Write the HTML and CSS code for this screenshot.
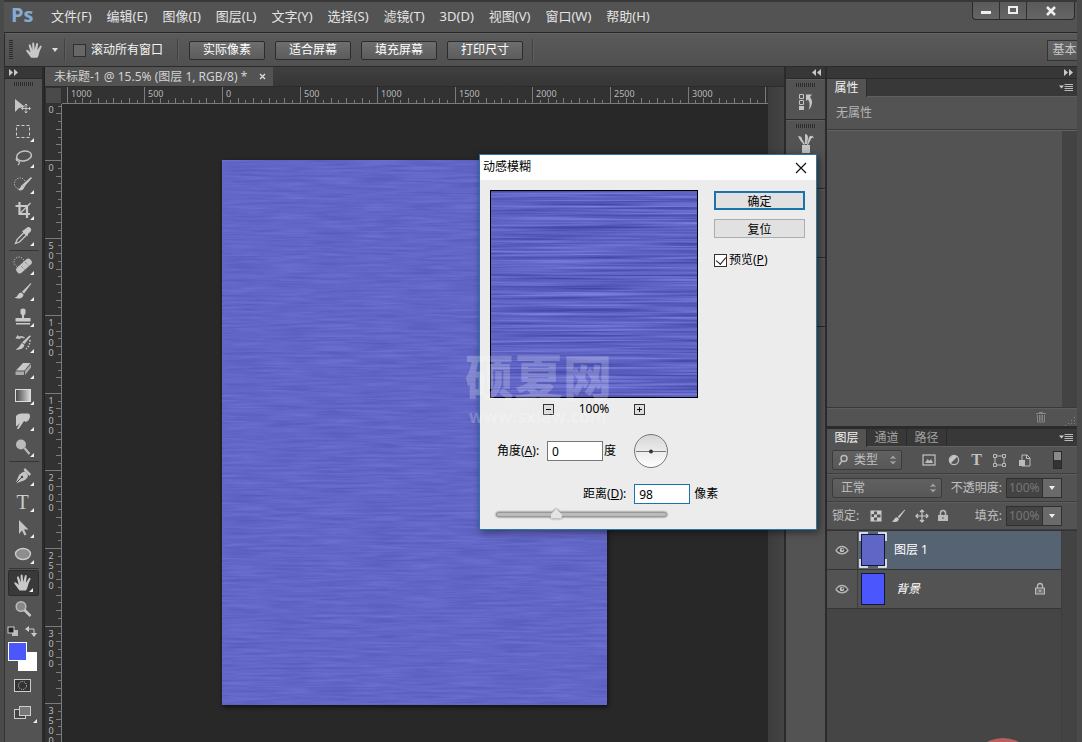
FILE: index.html
```html
<!DOCTYPE html>
<html lang="zh-CN">
<head>
<meta charset="utf-8">
<title>未标题-1</title>
<link rel="stylesheet" href="styles.css">
</head>
<body>
<svg class="defs" width="0" height="0" aria-hidden="true">
  <defs>
    <filter id="brushed-soft" x="0" y="0" width="100%" height="100%" color-interpolation-filters="sRGB">
      <feTurbulence type="fractalNoise" baseFrequency="0.022 0.4" numOctaves="3" seed="4"/>
      <feColorMatrix values="0.11 0 0 0 0.33  0.11 0 0 0 0.345  0.11 0 0 0 0.72  0 0 0 0 1"/>
    </filter>
    <filter id="brushed-hard" x="0" y="0" width="100%" height="100%" color-interpolation-filters="sRGB">
      <feTurbulence type="fractalNoise" baseFrequency="0.006 0.42" numOctaves="3" seed="9"/>
      <feColorMatrix values="0.36 0 0 0 0.19  0.36 0 0 0 0.205  0.36 0 0 0 0.58  0 0 0 0 1"/>
    </filter>
    <linearGradient id="fade"><stop offset="0" stop-color="#444"/><stop offset="1" stop-color="#ddd"/></linearGradient>
    <linearGradient id="dial" x2="0" y2="1"><stop offset="0" stop-color="#d6d6d6"/><stop offset="1" stop-color="#fff"/></linearGradient>
    <symbol id="hand" viewBox="0 0 20 20"><path fill="#c9c9c9" d="M6.5 17.5 2 11.5q-1.3-1.6-.4-2.2.8-.5 2 .6L5.8 12 4 5q-.3-1.4.7-1.6.9-.2 1.3 1L7.800 9.500 7.600 3q0-1.400 1-1.400t1.100 1.400L10.200 9 11.700 3.200q.4-1.300 1.300-1.100 1 .3.700 1.500L12.900 9.800 15.700 5.500q.700-1 1.500-.5.700.500.100 1.500-2 4-2.500 6.500-.3 2.500-1.800 4.500z"/></symbol>
    <symbol id="brush" viewBox="0 0 20 20"><path fill="#c9c9c9" d="M18.500 2.500 11 12.500 9 10.800 17.500 2.200zM8.300 11.500l2.200 1.900q-.4 3.700-4.500 4-2.300.2-4.500-.7 2.500-.6 3.200-2.500.9-2.500 3.600-2.700z"/></symbol>
    <symbol id="eye" viewBox="0 0 14 10"><path d="M1 5.500Q3.500 1.500 7 1.500t6 4Q10.500 8.800 7 8.800T1 5.500z" fill="#444" stroke="#b5b5b5" stroke-width="1.300"/><circle cx="7" cy="5" r="2.300" fill="#c4c4c4"/><circle cx="7.500" cy="4.500" r="1" fill="#444"/></symbol>
    <symbol id="updown" viewBox="0 0 6 10"><path d="M0 4 3 .5 6 4zM0 6 3 9.500 6 6z" fill="#a5a5a5"/><path d="M1.500 3.500h3v-.5h-3zM1.500 6.500h3v.5h-3z" fill="#555"/></symbol>
    <symbol id="panelmenu" viewBox="0 0 14 10"><path d="M0 2.500h5L2.500 5.500z" fill="#ccc"/><path d="M5.500 1.500H14M5.500 3.500H14M5.500 5.500H14M5.500 7.500H14" stroke="#bbb"/></symbol>
  </defs>
</svg>
<div class="app">
  <header class="menubar">
    <span class="logo">Ps</span>
    <nav class="menus">
      <button>文件(F)</button><button>编辑(E)</button><button>图像(I)</button><button>图层(L)</button><button>文字(Y)</button><button>选择(S)</button><button>滤镜(T)</button><button>3D(D)</button><button>视图(V)</button><button>窗口(W)</button><button>帮助(H)</button>
    </nav>
    <div class="winctl">
      <button aria-label="最小化"><svg width="12" height="12"><rect x="1" y="6" width="10" height="3" fill="#eee"/></svg></button>
      <button aria-label="最大化"><svg width="12" height="12"><rect x="2" y="2" width="8" height="6" fill="none" stroke="#eee" stroke-width="2"/></svg></button>
      <button class="wide" aria-label="关闭"><svg width="12" height="12"><path d="M2 2l8 8M10 2l-8 8" stroke="#eee" stroke-width="2.500"/></svg></button>
    </div>
  </header>

  <div class="optbar">
    <span class="vgrip"></span>
    <button class="toolpick" aria-label="抓手工具"><svg width="19" height="19"><use href="#hand"/></svg><svg width="6" height="4"><path d="M0 0h6L3 4z" fill="#ddd"/></svg></button>
    <span class="vsep"></span>
    <label class="scroll-all"><input type="checkbox" class="darkcheck">滚动所有窗口</label>
    <span class="vsep"></span>
    <div class="optbtns"><button>实际像素</button><button>适合屏幕</button><button>填充屏幕</button><button>打印尺寸</button></div>
    <span class="vsep"></span>
    <button class="workspace-pick">基本</button>
  </div>

  <div class="work">
    <aside class="tools">
      <div class="colhead"><svg width="9" height="7"><path d="M0 0l4 3.500L0 7zM5 0l4 3.500L5 7z" fill="#c8c8c8"/></svg></div>
      <div class="grip"></div>
      <div class="toolset">
        <button aria-label="移动"><svg width="22" height="20"><path d="M3 3v13l4-4 6-1z" fill="#c4c4c4"/><path d="M14 8v9M9.500 12.500h9M12.500 9.500 14 8l1.500 1.500M12.500 15.500 14 17l1.500-1.500M11 11l-1.500 1.500L11 14M17 11l1.500 1.500L17 14" stroke="#c4c4c4" fill="none"/></svg></button>
        <button class="more" aria-label="矩形选框"><svg width="20" height="20"><rect x="3.500" y="3.500" width="13" height="12" fill="none" stroke="#d0d0d0" stroke-dasharray="3 2"/></svg></button>
        <button class="more" aria-label="套索"><svg width="20" height="20"><ellipse cx="11" cy="8" rx="7.500" ry="4.800" transform="rotate(-12 11 8)" fill="none" stroke="#c4c4c4" stroke-width="1.500"/><path d="M4 10q-2 2 1 3t0 4" fill="none" stroke="#c4c4c4" stroke-width="1.300"/></svg></button>
        <button class="more" aria-label="快速选择"><svg width="20" height="20"><circle cx="7" cy="9.500" r="5.500" fill="none" stroke="#ddd" stroke-dasharray="1 1.500"/><path d="M19 4l-8 9-2-2 9-8zM8.500 11l3 2.500q-2 4-6.500 2.500 2-1 3.500-5z" fill="#c9c9c9"/></svg></button>
        <button class="more" aria-label="裁剪"><svg width="20" height="20"><path d="M6.500 2v12H17M2.500 6h11.500v12" fill="none" stroke="#c9c9c9" stroke-width="2.200"/><path d="M7 13.500 17.500 3" stroke="#c9c9c9" stroke-width="1.200"/></svg></button>
        <button class="more" aria-label="吸管"><svg width="20" height="20"><path d="M2.500 17.500 4 13.500 11 6.500l2.500 2.500-7 7z" fill="#555" stroke="#c9c9c9" stroke-width="1.300"/><path d="M9 5l2-1 3-2.500q2-1.200 3.500.5t.2 3.500l-2.700 2.500-.5 2.500z" fill="#c9c9c9"/></svg></button>
        <hr>
        <button class="more" aria-label="修复画笔"><svg width="20" height="20"><circle cx="6" cy="7" r="5" fill="none" stroke="#ddd" stroke-dasharray="1 1.500"/><rect x="2" y="7.500" width="18" height="7" rx="3" transform="rotate(-42 11 11)" fill="#c4c4c4"/><path d="m8 11 5 5M12 7l4 4" stroke="#777" stroke-dasharray="1 1"/></svg></button>
        <button class="more" aria-label="画笔"><svg width="20" height="20"><use href="#brush"/></svg></button>
        <button class="more" aria-label="图章"><svg width="20" height="20"><path d="M7.500 2.500q2.500-2 5 0v4l-1.500 2v2.500h6.500v3.500h-15v-3.500H9V8.500L7.500 6.500zM3 16h14v1.500H3z" fill="#c9c9c9"/></svg></button>
        <button class="more" aria-label="历史记录画笔"><svg width="20" height="20"><path d="M2.500 5.500l2-3.500 1.500 1.500q3-1.500 6 1l-1 1q-2-1.300-4-.5l1 1z" fill="#c4c4c4"/><path d="M18 3 11.500 11 9 9.500 16.500 2.500zM8.500 10l3 2Q10 17.500 2.500 16.500 6 15 8.500 10z" fill="#c9c9c9"/><path d="M17 7q0 6-4 9" fill="none" stroke="#ccc" stroke-width="1.500" stroke-dasharray="1.500 1.500"/></svg></button>
        <button class="more" aria-label="橡皮擦"><svg width="20" height="20"><path d="M3 11.500 10 4h7.500l-6 7.500z" fill="#c9c9c9"/><path d="M2.500 12.500H11V16H2.500zM12 12l6-7v3.500L12 16z" fill="#aaa"/></svg></button>
        <button class="more" aria-label="渐变"><svg width="20" height="20"><rect x="2.500" y="4.500" width="15" height="12" fill="url(#fade)" stroke="#ddd"/></svg></button>
        <button class="more" aria-label="涂抹"><svg width="20" height="20"><path d="M3 5q2-3 6-2.500h6q2 0 2 3-.5 4-4 5.500l-2-1-5 7.500q-1.500 1-2 0L7 12l-3 3q-1 .500-1-1z" fill="#c9c9c9"/></svg></button>
        <button class="more" aria-label="减淡"><svg width="20" height="20"><circle cx="8" cy="7.500" r="5" fill="#bbb"/><path d="m11.500 11 5 6" stroke="#bbb" stroke-width="2.200"/></svg></button>
        <hr>
        <button class="more" aria-label="钢笔"><svg width="20" height="20"><path d="M2.500 17.500 6 9q3-3.500 6-3.500l3 3.500q0 3-4 5.500z" fill="#c4c4c4"/><path d="m2.500 17.500 6-6" stroke="#444"/><circle cx="9" cy="11" r="1.200" fill="#444"/><path d="m12 2 6 6-1.500 2-6-6z" fill="#c4c4c4"/></svg></button>
        <button class="more" aria-label="文字"><span class="t-icon">T</span></button>
        <button class="more" aria-label="路径选择"><svg width="20" height="20"><path d="M6 2v14l3-3.500 2.500 5 2-1L11 11.500h4.500z" fill="#c4c4c4"/></svg></button>
        <button class="more" aria-label="椭圆"><svg width="20" height="20"><ellipse cx="10" cy="10" rx="7.500" ry="5.500" fill="#8d8d8d" stroke="#ccc" stroke-width="1.300"/></svg></button>
        <hr>
        <button class="more on" aria-label="抓手"><svg width="20" height="20"><use href="#hand"/></svg></button>
        <button aria-label="缩放"><svg width="20" height="20"><circle cx="8" cy="7.500" r="4.800" fill="#888" stroke="#bbb" stroke-width="1.500"/><path d="m11.500 11 6 6" stroke="#c9c9c9" stroke-width="2.500"/></svg></button>
      </div>
      <div class="swapline">
        <svg width="12" height="11"><rect x="5" y="4" width="6" height="6" fill="#bbb"/><rect x="1" y="1" width="6" height="6" fill="#222" stroke="#ccc"/></svg>
        <svg width="12" height="11"><path d="M4 0v6L0 3zM6 7h6L9 11z" fill="#ccc"/><path d="M3 3h6v5" fill="none" stroke="#ccc"/></svg>
      </div>
      <div class="swatches"><button class="bg" aria-label="背景色"></button><button class="fg" aria-label="前景色"></button></div>
      <button class="tall" aria-label="快速蒙版"><svg width="18" height="14"><rect x=".5" y=".5" width="16" height="12" fill="#333" stroke="#ccc"/><circle cx="8.500" cy="6.500" r="4" fill="none" stroke="#ddd" stroke-dasharray="1 1.200"/></svg></button>
      <button class="tall more" aria-label="屏幕模式"><svg width="18" height="14"><rect x=".5" y="3.500" width="11" height="9" fill="#444" stroke="#ccc"/><rect x="5.500" y=".5" width="11" height="9" fill="#777" stroke="#ccc"/></svg></button>
    </aside>

    <main class="doc">
      <div class="tabs"><div class="tab">未标题-1 @ 15.5% (图层 1, RGB/8) *<button aria-label="关闭文档"><svg width="7" height="7"><path d="M1 1l5 5M6 1 1 6" stroke="#ddd" stroke-width="1.300"/></svg></button></div></div>
      <div class="view">
        <div class="corner"></div>
        <svg class="hruler" id="hruler"></svg>
        <div class="scroll"></div>
        <svg class="vruler" id="vruler"></svg>
        <div class="canvas"><svg class="artboard"><rect width="100%" height="100%" filter="url(#brushed-soft)"/></svg></div>
      </div>
    </main>

    <aside class="dock">
      <div class="colhead end"><svg width="9" height="7"><path d="M4 0 0 3.500 4 7zM9 0 5 3.500 9 7z" fill="#c8c8c8"/></svg></div>
      <div class="dockgroup first"><div class="grip"></div><button aria-label="历史记录"><svg width="18" height="20"><path d="M2.500 3.500h4v4h-4zM2.500 9.500h4v4h-4z" fill="none" stroke="#c4c4c4"/><path d="M2 15h5v4H2z" fill="#c4c4c4"/><path d="M9 3.500h6L13 6q5 6-1.500 13 2.500-6-.5-10.500L9 10z" fill="#c4c4c4"/></svg></button></div>
      <div class="dockgroup"><div class="grip"></div><button aria-label="画笔预设"><svg width="18" height="22"><path d="M5 13h8v8H5zM8 2q3 0 3 4l-1 6H8zM1 4q4 0 4 3l3 5-1 1-4-5zM12 5q3-3 5 1-2-1-3 1l-3 6h-1z" fill="#c4c4c4"/></svg></button></div>
      <div class="dockgroup"></div>
      <div class="dockgroup"></div>
      <div class="dockrest"></div>
    </aside>

    <aside class="panels">
      <div class="colhead end"><svg width="9" height="7"><path d="M0 0l4 3.500L0 7zM5 0l4 3.500L5 7z" fill="#c8c8c8"/></svg></div>
      <section class="props">
        <div class="ptabs"><button class="active">属性</button><svg class="pm" width="14" height="10"><use href="#panelmenu"/></svg></div>
        <div class="propinfo">无属性</div>
        <div class="propbody"><div class="fill"></div><div class="scroll"></div></div>
        <div class="propfoot">
          <svg width="12" height="12"><path d="M1 2.500h10M4 1.500h4M2.500 4v7h7V4M4.500 4v6M6 4v6M7.500 4v6" fill="none" stroke="#858585"/></svg>
          <svg width="10" height="10"><path d="M9.500 1v9M6.500 4v6M3.500 7v3M.5 9v1" stroke="#808080" stroke-dasharray="1 2"/></svg>
        </div>
      </section>
      <section class="layers">
        <div class="ptabs"><button class="active">图层</button><button>通道</button><button>路径</button><svg class="pm" width="14" height="10"><use href="#panelmenu"/></svg></div>
        <div class="filterrow">
          <button class="drop type"><svg width="11" height="12"><circle cx="6" cy="4.500" r="3" fill="none" stroke="#bbb" stroke-width="1.500"/><path d="M4 7 1 11" stroke="#bbb" stroke-width="1.500"/></svg>类型<svg class="ud" width="6" height="10"><use href="#updown"/></svg></button>
          <div class="filters">
            <button aria-label="像素图层"><svg width="14" height="12"><rect x="1" y="1" width="12" height="10" fill="none" stroke="#bbb" stroke-width="1.300"/><path d="M3 9l2.500-4 2 2L9 5l2 4z" fill="#bbb"/></svg></button>
            <button aria-label="调整图层"><svg width="12" height="12"><circle cx="6" cy="6" r="4.600" fill="#555" stroke="#bbb" stroke-width="1.300"/><path d="M2.500 9.500A5 5 0 0 1 9.500 2.500z" fill="#c4c4c4"/></svg></button>
            <button aria-label="文字图层"><span class="t-small">T</span></button>
            <button aria-label="形状图层"><svg width="13" height="13"><path d="M2 2h9v9H2z" fill="none" stroke="#bbb"/><path d="M.5.500h3v3h-3zM9.500.500h3v3h-3zM.5 9.500h3v3h-3zM9.500 9.500h3v3h-3z" fill="#555" stroke="#bbb"/></svg></button>
            <button aria-label="智能对象"><svg width="13" height="13"><path d="M4 1h5l3 3v8H4z" fill="none" stroke="#bbb"/><path d="M8.500 1v3.500H12" fill="none" stroke="#bbb"/><rect x="1" y="6" width="6" height="6" fill="#bbb"/></svg></button>
          </div>
          <button class="toggle" aria-label="过滤开关"></button>
        </div>
        <div class="moderow">
          <button class="drop mode">正常<svg class="ud" width="6" height="10"><use href="#updown"/></svg></button>
          <label class="num">不透明度:<input type="text" value="100%" disabled></label><button class="arrow" aria-label="不透明度滑块"><svg width="6" height="4"><path d="M0 0h6L3 4z" fill="#eee"/></svg></button>
        </div>
        <div class="moderow lockrow">
          <span class="locklabel">锁定:</span>
          <div class="locks">
            <button aria-label="锁定透明像素"><svg width="12" height="12"><path d="M.5.500h11v11H.5z" fill="#ccc"/><path d="M4 1.500h3v3H4zM1.500 4H4v3H1.500zM7 4.500h3.500v3H7zM4 7.500h3v3H4z" fill="#555"/></svg></button>
            <button aria-label="锁定图像像素"><svg width="17" height="16" viewBox="0 0 20 20"><use href="#brush"/></svg></button>
            <button aria-label="锁定位置"><svg width="14" height="14"><path d="M7 1v12M1 7h12M5 3l2-2 2 2M5 11l2 2 2-2M3 5 1 7l2 2M11 5l2 2-2 2" fill="none" stroke="#c9c9c9" stroke-width="1.200"/></svg></button>
            <button aria-label="锁定全部"><svg width="12" height="13"><path d="M3.500 6V4q0-2.500 2.500-2.500T8.500 4v2" fill="none" stroke="#bbb" stroke-width="1.500"/><rect x="1" y="6" width="10" height="6" fill="#bbb"/><path d="M6 8v2" stroke="#555"/></svg></button>
          </div>
          <label class="num">填充:<input type="text" value="100%" disabled></label><button class="arrow" aria-label="填充滑块"><svg width="6" height="4"><path d="M0 0h6L3 4z" fill="#eee"/></svg></button>
        </div>
        <div class="layerbody">
          <div class="layerlist">
            <div class="layer selected">
              <button class="eye" aria-label="可见性"><svg width="14" height="10"><use href="#eye"/></svg></button>
              <span class="thumb framed"><svg width="30" height="38"><path d="M2 10V2h8M20 2h8v8M28 28v8h-8M10 36H2v-8" fill="none" stroke="#fff" stroke-width="1.500"/><rect x="3.500" y="3.500" width="23" height="31" fill="#6066c6" stroke="#14163a"/></svg></span>
              <span>图层 1</span>
            </div>
            <div class="layer">
              <button class="eye" aria-label="可见性"><svg width="14" height="10"><use href="#eye"/></svg></button>
              <span class="thumb"><svg width="30" height="38"><rect x="3.500" y="3.500" width="23" height="31" fill="#4b57fc" stroke="#14163a"/></svg></span>
              <span class="italic">背景</span>
              <svg class="lock" width="12" height="14"><path d="M3.500 6V4q0-2.500 2.500-2.500T8.500 4v2" fill="none" stroke="#bbb" stroke-width="1.300"/><rect x="1.500" y="6" width="9" height="6" fill="#777" stroke="#bbb"/><path d="M6 8v2" stroke="#ddd"/></svg>
            </div>
          </div>
          <div class="scroll"></div>
          <span class="badge"></span>
        </div>
      </section>
    </aside>
  </div>

  <div class="dialog" role="dialog" aria-labelledby="dlg-title">
    <div class="dlghead"><span id="dlg-title">动感模糊</span><button aria-label="关闭"><svg width="12" height="12"><path d="M1 1l10 10M11 1 1 11" stroke="#111" stroke-width="1.200"/></svg></button></div>
    <div class="dlgbody">
      <div class="dlgtop">
        <div class="previewcol">
          <svg class="preview"><rect width="100%" height="100%" filter="url(#brushed-hard)"/></svg>
          <div class="zoomrow">
            <button aria-label="缩小"><svg width="11" height="11"><rect x=".5" y=".5" width="10" height="10" fill="#ddd" stroke="#333"/><path d="M3 5.500h5" stroke="#111"/></svg></button>
            <span>100%</span>
            <button aria-label="放大"><svg width="11" height="11"><rect x=".5" y=".5" width="10" height="10" fill="#ddd" stroke="#333"/><path d="M3 5.500h5M5.500 3v5" stroke="#111"/></svg></button>
          </div>
        </div>
        <div class="dlgbtns">
          <button class="ok">确定</button>
          <button>复位</button>
          <label><input type="checkbox" class="lightcheck" checked><span>预览(<u>P</u>)</span></label>
        </div>
      </div>
      <div class="anglerow">
        <label for="angle">角度(<u>A</u>):</label><input id="angle" type="text" value="0"><span>度</span>
        <svg class="dial" width="34" height="34"><circle cx="17" cy="17" r="16.500" fill="url(#dial)" stroke="#777"/><path d="M2 17.500h30" stroke="#777"/><circle cx="17" cy="17.500" r="2" fill="#333"/></svg>
      </div>
      <div class="distrow"><label for="dist">距离(<u>D</u>):</label><input id="dist" class="focus" type="text" value="98"><span>像素</span></div>
      <div class="sliderbox">
        <input class="slider" type="range" min="0" max="100" value="34" aria-label="距离">
      </div>
    </div>
  </div>
  <div class="watermark"><strong>硕夏网</strong><span>www.sxiaw.com</span></div>
</div>
<script src="ruler.js"></script>
</body>
</html>
```
FILE: styles.css
```css
* { box-sizing: border-box; }
html, body { height: 100%; }
body {
  margin: 0;
  overflow: hidden;
  background: #535353;
  color: #e4e4e4;
  font: 12px/16px "Noto Sans", "Noto Sans CJK SC", sans-serif;
}
button, input { font: inherit; color: inherit; }
button { padding: 0; border: 0; background: none; display: flex; align-items: center; justify-content: center; white-space: nowrap; }
svg { display: block; flex: none; }
.defs { position: absolute; }
.app {
  position: relative;
  display: flex;
  flex-direction: column;
  height: 100vh;
  border: solid #4a4a4a;
  border-width: 0 5px 0 4px;
  overflow: hidden;
}

.menubar { display: flex; height: 33px; flex: none; border-bottom: 1px solid #262626; border-top: 2px solid #383838; background: #535353; }
.logo { width: 40px; padding-left: 7px; font: bold 20px/26px "Open Sans", "Noto Sans", sans-serif; color: #85abd3; }
.menus { display: flex; gap: 15px; flex: 1; padding: 0 0 2px 7px; font-size: 13px; align-items: center; }
.winctl { display: flex; height: 18px; margin-right: 2px; border: 1px solid #2a2a2a; border-top: 0; border-radius: 0 0 4px 4px; background: linear-gradient(#5a5a5a, #656565); }
.winctl button { width: 27px; border-right: 1px solid #2e2e2e; }
.winctl .wide { width: 47px; border: 0; }

.optbar { display: flex; align-items: center; height: 34px; flex: none; border: 1px solid #2b2b2b; border-top-color: #636363; border-right: 0; background: linear-gradient(#5a5a5a, #505050); }
.vgrip { width: 4px; height: 20px; margin-left: 4px; background: repeating-linear-gradient(#2c2c2c 0 1px, #565656 1px 2px); }
.toolpick { gap: 8px; margin-left: 12px; }
.vsep { width: 2px; height: 22px; margin-left: 6px; border-left: 1px solid #414141; border-right: 1px solid #5e5e5e; }
.scroll-all { display: flex; align-items: center; gap: 5px; margin: 0 8px 0 7px; color: #f4f4f4; }
.darkcheck { appearance: none; width: 13px; height: 13px; margin: 0; border: 1px solid #2f2f2f; background: #676767; }
.optbtns { display: flex; gap: 10px; margin: 0 3px 0 10px; }
.optbtns button { width: 76px; height: 19px; border: 1px solid #2c2c2c; border-radius: 2px; background: linear-gradient(#6e6e6e, #5c5c5c); color: #fff; }
.workspace-pick { width: 30px; height: 21px; margin-left: auto; padding-left: 4px; border: 1px solid #333; border-right: 0; background: linear-gradient(#666, #595959); color: #c6c6c6; }

.work { display: flex; flex: 1; min-height: 0; background: #2b2b2b; gap: 2px; }
.colhead { display: flex; align-items: center; height: 12px; flex: none; padding: 0 4px; background: #373737; border-bottom: 1px solid #2a2a2a; }
.colhead.end { justify-content: flex-end; }
.grip { width: 20px; height: 4px; margin: 3px auto; background: repeating-linear-gradient(90deg, #2c2c2c 0 1px, #565656 1px 2px); flex: none; }

.tools { display: flex; flex-direction: column; width: 38px; flex: none; background: #535353; border-left: 1px solid #333; }
.toolset { display: flex; flex-direction: column; padding: 4px 3px 0; }
.toolset button { height: 26px; padding-right: 2px; position: relative; flex: none; }
.toolset hr { width: 30px; height: 1px; margin: 1px auto; border: 0; background: #353535; flex: none; }
.more { position: relative; }
.more::after { content: ""; position: absolute; right: 5px; bottom: 3px; border: 2px solid transparent; border-right-color: #f0f0f0; border-bottom-color: #f0f0f0; }
.toolset .on { background: #393939; border: 1px solid #2c2c2c; border-radius: 2px; }
.t-icon { font: 20px/22px "Liberation Serif", serif; color: #ccc; }
.swapline { display: flex; justify-content: space-between; padding: 4px 5px 0 2px; height: 20px; flex: none; }
.swatches { position: relative; height: 30px; margin: 0 3px; flex: none; }
.swatches button { position: absolute; width: 19px; height: 19px; }
.swatches .fg { left: 0; top: 0; background: #4b57fa; border: 1px solid #fff; }
.swatches .bg { left: 10px; top: 10px; background: #fff; }
.tall { height: 27px; padding-right: 2px; flex: none; }

.doc { display: flex; flex-direction: column; flex: 1; min-width: 0; border-left: 1px solid #222; }
.tabs { display: flex; height: 20px; flex: none; background: linear-gradient(#404040, #363636); border-bottom: 1px solid #2c2c2c; }
.tab { display: flex; align-items: center; gap: 12px; padding: 0 7px 0 9px; background: #535353; color: #d2d2d2; white-space: nowrap; }
.view { flex: 1; min-height: 0; display: grid; grid-template: 17px minmax(0, 1fr) / 17px minmax(0, 1fr) 16px; background: #323232; }
.corner { background: #4a4a4a; margin: 1px; }
.hruler, .vruler { width: 100%; height: 100%; overflow: hidden; font: 9px "Noto Sans", sans-serif; fill: #b9b9b9; background: #323232; }
.vruler { grid-column: 1; text-anchor: middle; }
.ticks { stroke: #7b7b7b; fill: none; shape-rendering: crispEdges; }
.scroll { background: linear-gradient(90deg, #3d3d3d, #444); }
.view .scroll { grid-column: 3; grid-row: 1 / 3; }
.canvas { position: relative; background: #282828; overflow: hidden; }
.artboard { position: absolute; left: 160px; top: 56px; width: 385px; height: 545px; box-shadow: 1px 2px 4px #111; }

.dock { display: flex; flex-direction: column; width: 39px; flex: none; }
.dockgroup { height: 68px; flex: none; margin-bottom: 1px; background: #535353; border-top: 1px solid #5e5e5e; }
.dockgroup.first { height: 40px; }
.dockgroup button { width: 100%; padding-top: 1px; }
.dockrest { flex: 1; background: #535353; }

.panels { display: flex; flex-direction: column; width: 250px; flex: none; }
.ptabs { display: flex; height: 18px; flex: none; background: #383838; border-bottom: 1px solid #5f5f5f; }
.ptabs button { width: 40px; color: #a2a2a2; border-right: 1px solid #2b2b2b; }
.ptabs .active { background: #535353; color: #f2f2f2; margin-bottom: -1px; }
.pm { margin: 4px 4px 0 auto; }
.props { display: flex; flex-direction: column; height: 350px; flex: none; background: #535353; border-bottom: 3px solid #2b2b2b; }
.propinfo { padding: 8px 9px; height: 33px; color: #b4b4b4; border-bottom: 1px solid #3a3a3a; }
.propbody { display: flex; flex: 1; border-top: 1px solid #636363; }
.fill { flex: 1; }
.propbody .scroll, .layerbody .scroll { width: 15px; background: #434343; }
.propfoot { display: flex; justify-content: flex-end; align-items: center; gap: 18px; height: 19px; padding-right: 2px; border-top: 1px solid #393939; box-shadow: inset 0 1px #5e5e5e; }
.propfoot svg:last-child { align-self: flex-end; }

.layers { display: flex; flex-direction: column; flex: 1; min-height: 0; background: #535353; }
.filterrow, .moderow { display: flex; align-items: center; height: 28px; flex: none; padding: 0 10px 0 5px; border-bottom: 1px solid #3e3e3e; box-shadow: 0 1px #5c5c5c; }
.filterrow { height: 27px; }
.drop { height: 20px; padding: 0 5px; justify-content: flex-start; border: 1px solid #3b3b3b; border-radius: 2px; background: linear-gradient(#606060, #575757); color: #c0c0c0; }
.drop .ud { margin-left: auto; }
.type { width: 70px; gap: 5px; }
.mode { width: 110px; padding-left: 8px; }
.filters { display: flex; flex: 1; justify-content: space-between; padding: 0 22px 0 20px; }
.t-small { font: bold 16px/16px "Liberation Serif", serif; color: #c0c0c0; }
.toggle { width: 9px; height: 18px; margin-right: 5px; border: 1px solid #2a2a2a; background: linear-gradient(#8a8a8a 50%, #333 50%); }
.num { display: flex; align-items: center; gap: 4px; margin-left: auto; color: #c0c0c0; }
.num input { width: 37px; height: 20px; padding: 0 2px; border: 1px solid #2f2f2f; background: #434343; color: #777; }
.arrow { width: 19px; height: 20px; margin-right: 5px; border: 1px solid #2f2f2f; border-left: 0; background: #6a6a6a; }
.locklabel { color: #c0c0c0; }
.locks { display: flex; align-items: center; gap: 8px; margin-left: 11px; }
.layerbody { position: relative; display: flex; flex: 1; min-height: 0; border-top: 1px solid #333; overflow: hidden; }
.layerlist { flex: 1; background: #454545; border-right: 1px solid #3d3d3d; }
.layer { display: flex; align-items: center; height: 39px; border-bottom: 1px solid #353535; background: #535353; color: #fff; }
.layer.selected { background: linear-gradient(90deg, #535353 30px, #556373 30px); }
.eye { width: 31px; align-self: stretch; border-right: 1px solid #3b3b3b; }
.thumb { margin: 0 6px 0 0; }
.italic { font-style: italic; padding-left: 2px; }
.lock { margin: 0 15px 0 auto; }
.badge { position: absolute; right: 40px; bottom: -64px; width: 68px; height: 68px; border-radius: 50%; background: #b95f5f; }

.dialog { position: absolute; left: 475px; top: 154px; width: 338px; border: 1px solid #2776ad; background: #ececec; color: #000; box-shadow: 2px 2px 8px rgba(0, 0, 0, .5); }
.dlghead { display: flex; justify-content: space-between; height: 25px; padding: 0 9px 0 3px; background: #fff; }
.dlghead span { line-height: 24px; }
.dlgbody { padding: 10px 10px 9px; }
.dlgtop { display: flex; gap: 16px; }
.previewcol { width: 208px; }
.preview { width: 208px; height: 208px; border: 1px solid #000; }
.zoomrow { display: flex; align-items: center; justify-content: center; gap: 25px; height: 22px; }
.dlgbtns { display: flex; flex-direction: column; gap: 9px; flex: 1; padding: 1px 1px 0 0; }
.dlgbtns button { height: 19px; padding-top: 2px; border: 1px solid #adadad; background: #e1e1e1; }
.dlgbtns .ok { border: 2px solid #1874ab; }
.dlgbtns label { display: flex; align-items: center; gap: 2px; margin: 5px 0 0; }
.lightcheck { appearance: none; width: 13px; height: 13px; margin: 0; border: 1px solid #333; background: #fff; position: relative; }
.lightcheck:checked::after { content: ""; position: absolute; left: 3px; top: 0; width: 5px; height: 8px; border: solid #222; border-width: 0 1px 1px 0; transform: rotate(40deg); }
.anglerow { display: flex; align-items: center; height: 34px; margin: 14px 0 0 7px; }
.dialog input[type="text"] { width: 56px; height: 20px; margin: 0 1px 0 8px; padding: 0 4px; border: 1px solid #777; background: #fff; outline: 0; }
.dialog input.focus { border-color: #1874ab; margin-right: 4px; }
.dial { margin-left: 18px; }
.distrow { display: flex; align-items: center; margin: 16px 0 0 93px; }
.sliderbox { margin: 4px 0 0 6px; filter: drop-shadow(0 0 1px #555); }
.slider { appearance: none; display: block; width: 171px; height: 12px; margin: 0; background: none; }
.slider::-webkit-slider-runnable-track { height: 5px; border: 1px solid #999; border-radius: 3px; background: #bbb; }
.slider::-webkit-slider-thumb { appearance: none; width: 11px; height: 10px; margin-top: -4px; background: #e4e4e4; clip-path: polygon(50% 0, 100% 60%, 100% 100%, 0 100%, 0 60%); }

.watermark { position: absolute; left: 461px; top: 346px; display: flex; flex-direction: column; color: rgba(255, 255, 255, .22); pointer-events: none; }
.watermark strong { font: 900 49px/58px "Noto Sans CJK SC", sans-serif; }
.watermark span { padding-left: 4px; font: bold 17px/26px "Open Sans", "Noto Sans", sans-serif; }
```
FILE: ruler.js
```js
// Draws the document rulers: one major mark per 500 units, ten steps between marks.
(function () {
  var NS = "http://www.w3.org/2000/svg";
  var STEP = 77.6;
  function add(svg, name, attrs, text) {
    var el = document.createElementNS(NS, name);
    for (var key in attrs) el.setAttribute(key, attrs[key]);
    if (text !== undefined) el.textContent = text;
    svg.appendChild(el);
  }
  function draw(id, zero, vertical) {
    var svg = document.getElementById(id);
    var box = svg.getBoundingClientRect();
    var size = vertical ? box.height : box.width;
    var d = "";
    svg.textContent = "";
    for (var i = -3; zero + i * STEP < size; i++) {
      var major = zero + i * STEP;
      for (var k = 0; k < 10; k++) {
        var p = Math.round(major + k * STEP / 10) + 0.5;
        var len = k === 0 ? 17 : (k % 2 ? 4 : 6);
        d += vertical ? "M" + (17 - len) + " " + p + "H17" : "M" + p + " " + (17 - len) + "V17";
      }
      var label = String(Math.abs(i * 500));
      var at = Math.round(major);
      if (!vertical) {
        if (at >= 0 && at + 25 < size) add(svg, "text", { x: at + 4, y: 10 }, label);
      } else {
        label.split("").forEach(function (c, n) {
          var y = at + 11 + n * 10;
          if (y > 5 && y < size + 4) add(svg, "text", { x: 6, y: y }, c);
        });
      }
    }
    d += vertical ? "M16.5 0V" + size : "M0 16.5H" + size;
    add(svg, "path", { d: d, "class": "ticks" });
  }
  function drawAll() {
    draw("hruler", 160, false);
    draw("vruler", 56, true);
  }
  drawAll();
  window.addEventListener("resize", drawAll);
})();
```
